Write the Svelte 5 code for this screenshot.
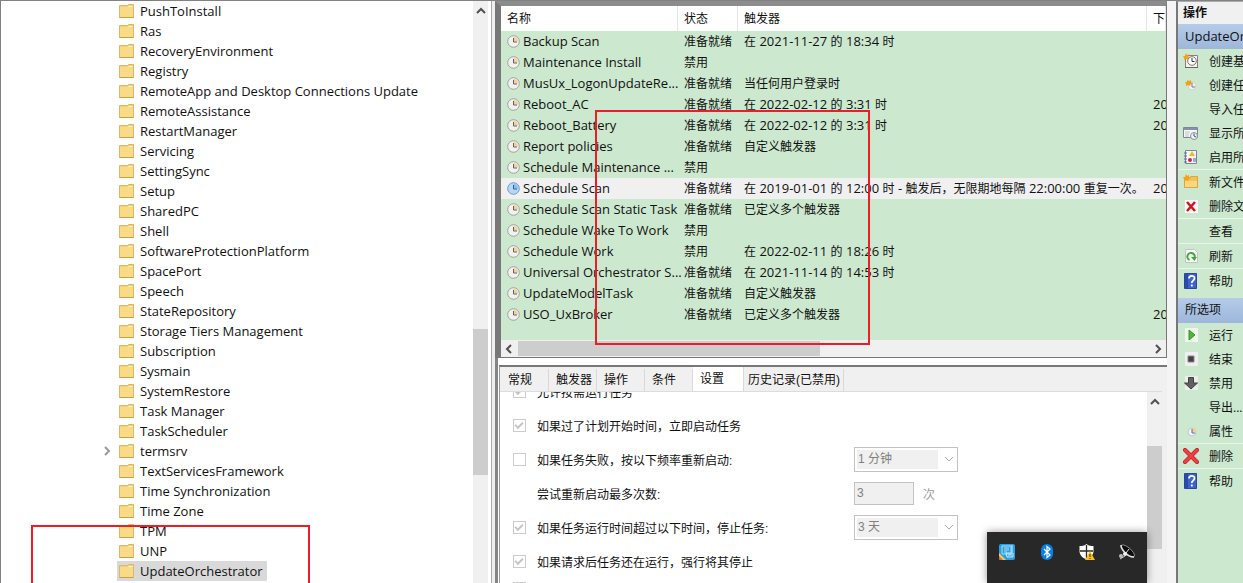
<script lang="ts">
	interface Task {
		name: string;
		status: string;
		trigger: string;
		next?: string;
	}

	interface Action {
		icon: string;
		label: string;
		line?: boolean;
	}

	let folders = [
		'PushToInstall', 'Ras', 'RecoveryEnvironment', 'Registry',
		'RemoteApp and Desktop Connections Update', 'RemoteAssistance', 'RestartManager',
		'Servicing', 'SettingSync', 'Setup', 'SharedPC', 'Shell', 'SoftwareProtectionPlatform',
		'SpacePort', 'Speech', 'StateRepository', 'Storage Tiers Management', 'Subscription',
		'Sysmain', 'SystemRestore', 'Task Manager', 'TaskScheduler', 'termsrv',
		'TextServicesFramework', 'Time Synchronization', 'Time Zone', 'TPM', 'UNP',
		'UpdateOrchestrator'
	];
	let current = $state('UpdateOrchestrator');

	const READY = '准备就绪';
	const OFF = '禁用';

	let tasks: Task[] = [
		{ name: 'Backup Scan', status: READY, trigger: '在 2021-11-27 的 18:34 时' },
		{ name: 'Maintenance Install', status: OFF, trigger: '' },
		{ name: 'MusUx_LogonUpdateRe...', status: READY, trigger: '当任何用户登录时' },
		{ name: 'Reboot_AC', status: READY, trigger: '在 2022-02-12 的 3:31 时', next: '20' },
		{ name: 'Reboot_Battery', status: READY, trigger: '在 2022-02-12 的 3:31 时', next: '20' },
		{ name: 'Report policies', status: READY, trigger: '自定义触发器' },
		{ name: 'Schedule Maintenance ...', status: OFF, trigger: '' },
		{
			name: 'Schedule Scan',
			status: READY,
			trigger: '在 2019-01-01 的 12:00 时 - 触发后，无限期地每隔 22:00:00 重复一次。',
			next: '20'
		},
		{ name: 'Schedule Scan Static Task', status: READY, trigger: '已定义多个触发器' },
		{ name: 'Schedule Wake To Work', status: OFF, trigger: '' },
		{ name: 'Schedule Work', status: OFF, trigger: '在 2022-02-11 的 18:26 时' },
		{ name: 'Universal Orchestrator S...', status: READY, trigger: '在 2021-11-14 的 14:53 时' },
		{ name: 'UpdateModelTask', status: READY, trigger: '自定义触发器' },
		{ name: 'USO_UxBroker', status: READY, trigger: '已定义多个触发器', next: '20' }
	];
	let selectedTask = $state('Schedule Scan');

	let tabs = ['常规', '触发器', '操作', '条件', '设置', '历史记录(已禁用)'];
	let activeTab = $state('设置');

	let folderActions: Action[] = [
		{ icon: 'basic', label: '创建基' },
		{ icon: 'create', label: '创建任' },
		{ icon: '', label: '导入任' },
		{ icon: 'running', label: '显示所' },
		{ icon: 'history', label: '启用所' },
		{ icon: 'folder', label: '新文件', line: true },
		{ icon: 'cross', label: '删除文' },
		{ icon: '', label: '查看', line: true },
		{ icon: 'refresh', label: '刷新', line: true },
		{ icon: 'help', label: '帮助', line: true }
	];

	let taskActions: Action[] = [
		{ icon: 'run', label: '运行' },
		{ icon: 'stop', label: '结束' },
		{ icon: 'down', label: '禁用' },
		{ icon: '', label: '导出...' },
		{ icon: 'clock', label: '属性' },
		{ icon: 'bigcross', label: '删除', line: true },
		{ icon: 'help', label: '帮助', line: true }
	];

	// Latin runs sit at odd indexes, they are set one size larger
	function runs(text: string): string[] {
		return text.split(/([ -~]+)/);
	}
</script>

{#snippet chevron(d: string)}
	<svg class="chevron" viewBox="0 0 10 10" width="10" height="10"><path {d} /></svg>
{/snippet}

{#snippet mixed(text: string)}
	{#each runs(text) as run, i}{#if i % 2}<span class="latin">{run}</span>{:else}{run}{/if}{/each}
{/snippet}

{#snippet actionIcon(name: string)}
	<svg class="action-icon" viewBox="0 0 16 16" width="16" height="16">
		{#if name === 'basic'}
			<path d="M2.500 2.500h12v12h-12z" fill="#f5f1ec" stroke="#8a7f80" />
			<path d="M2 14.500h13" stroke="#6c6466" />
			<circle cx="9" cy="8" r="4.300" fill="#fff" stroke="#75787c" />
			<path d="M9 5v3.500h2.500" fill="none" stroke="#335" />
			<path d="M3 0l1 2 2-1-1 2 2 1-2 1 0 2-2-1-2 1 0-2-1-2 2 0z" fill="#f5a21b" />
		{:else if name === 'create'}
			<circle cx="9" cy="9" r="4" fill="#f3f1f0" stroke="#d5cfcb" />
			<path d="M9 6v4h3" fill="none" stroke="#5b82b8" />
			<path d="M4 3l2 1 2-1 0 2 2 1-2 1-1 2-2-1-2 1 0-2-1-2 2 0z" fill="#f2a11c" />
		{:else if name === 'running'}
			<path d="M.5 2.500h14v10h-14z" fill="#f8f8f8" stroke="#7e8795" />
			<path d="M1 4h13" stroke="#8792a4" stroke-width="2" />
			<path d="M2 7h5M2 9h4M2 11h4" stroke="#b9bec6" />
			<circle cx="11" cy="11" r="3.500" fill="#eef2f7" stroke="#8b8f96" />
			<path d="M11 8.500V11l2 1" fill="none" stroke="#3d5170" />
		{:else if name === 'history'}
			<path d="M2.500 1.500h11v13h-11z" fill="#f6f6fa" stroke="#7a86a6" />
			<path d="M1 4h3M1 7h3M1 10h3M1 13h3" stroke="#586b99" />
			<path d="M9 2l3 5H6z" fill="#f0b91c" />
			<circle cx="7" cy="11" r="2" fill="#d5262c" />
			<path d="M10 10h3M10 12h3" stroke="#3f60b6" />
		{:else if name === 'folder'}
			<path d="M1.500 4.500h5l1-2h7v11h-13z" fill="#f0c45a" stroke="#d9a545" />
			<path d="M2 7h12v6H2z" fill="#f9d87b" />
			<path d="M3 0l1 2 2-1 0 2 2 1-2 1-1 2-2-1-2 1 0-2-1-2 2 0z" fill="#f2a11c" />
		{:else if name === 'cross'}
			<path d="M2 2h13v13H2z" fill="#fbfbfb" />
			<path d="M4 4l8 9M12 4l-8 9" stroke="#d2141b" stroke-width="2.500" />
		{:else if name === 'refresh'}
			<path d="M2.500 1.500h9l3 3v10h-12z" fill="#fafafa" stroke="#c4c4c4" />
			<path d="M6.500 12A3.700 3.700 0 1 1 11.500 10" fill="none" stroke="#3faa38" stroke-width="2" />
			<path d="M8 9h6l-2.500 4z" fill="#3faa38" />
		{:else if name === 'help'}
			<path d="M1.500.500h12v15h-12z" fill="#3d62ce" stroke="#2b4799" />
			<path d="M2 1h3v14H2z" fill="#294aa8" />
			<path d="M6 5.500C6 2 11.500 2 11.500 5.200 11.500 7.500 8.800 7.500 8.800 10M8.800 11.500v2" fill="none" stroke="#fff" stroke-width="1.800" />
		{:else if name === 'run'}
			<path d="M2 1h13v14H2z" fill="#f1f5ef" />
			<path d="M6 3l6 5-6 5z" fill="#46bb2e" stroke="#2f9c22" />
		{:else if name === 'stop'}
			<path d="M2 1h13v14H2z" fill="#efefef" />
			<path d="M5 5h6v6H5z" fill="#414141" stroke="#888" />
		{:else if name === 'down'}
			<path d="M2 1h13v14H2z" fill="#eceeec" />
			<path d="M5.500 2.500h5V8h4l-6.500 6-6.500-6h4z" fill="#606060" stroke="#404040" />
		{:else if name === 'clock'}
			<circle cx="9" cy="9" r="4" fill="#f4f5f6" stroke="#c8c4c2" />
			<path d="M9 5a4 4 0 0 1 4 4H9z" fill="#f3d292" />
			<path d="M9 6v4h3" fill="none" stroke="#456aa8" />
		{:else if name === 'bigcross'}
			<path d="M2 2l12 12M14 2L2 14" stroke="#a71a1c" stroke-width="4" stroke-linecap="round" />
			<path d="M2 2l12 12M14 2L2 14" stroke="#ec4043" stroke-width="3" stroke-linecap="round" />
		{/if}
	</svg>
{/snippet}

{#snippet actionList(items: Action[])}
	<ul class="actions">
		{#each items as item}
			<li class:line={item.line}>
				<button type="button">
					{@render actionIcon(item.icon)}
					<span>{item.label}</span>
				</button>
			</li>
		{/each}
	</ul>
{/snippet}

<div class="window">
	<nav class="tree-pane">
		<ul class="tree">
			{#each folders as folder}
				<li>
					<span class="twisty">
						{#if folder === 'termsrv'}{@render chevron('M3 1l4 4-4 4')}{/if}
					</span>
					<button type="button" class:current={folder === current} onclick={() => (current = folder)}>
						<svg viewBox="0 0 15 14" width="15" height="14">
							<path d="M.5 1.500h8l1-1h5v13H.5z" fill="#f0cf78" stroke="#dcb969" />
							<path d="M1 3h8l1-1h4v11H1z" fill="#f9da87" />
							<path d="M9.500 2.500h4" stroke="#fff3cb" />
							<path d="M.5 13.500h14" stroke="#c9a049" />
						</svg>
						<span>{folder}</span>
					</button>
				</li>
			{/each}
		</ul>
		<div class="scroll-v tree-scroll">
			{@render chevron('M1 7l4-4 4 4')}
			<div class="thumb"></div>
		</div>
		<div class="mark mark-folder"></div>
	</nav>

	<main class="center">
		<section class="task-pane">
			<table>
				<colgroup>
					<col class="col-name" />
					<col class="col-status" />
					<col />
					<col class="col-next" />
				</colgroup>
				<thead>
					<tr><th>名称</th><th>状态</th><th>触发器</th><th>下</th></tr>
				</thead>
				<tbody>
					{#each tasks as task}
						<tr class:selected={task.name === selectedTask} onclick={() => (selectedTask = task.name)}>
							<td class="name-cell">
								<div class="task-name">
									<svg viewBox="0 0 13 13" width="13" height="13">
										<circle cx="6.500" cy="6.500" r="5.800" fill={task.name === selectedTask ? '#b9d6f3' : '#f1f1ee'} stroke={task.name === selectedTask ? '#6b9bcc' : '#a3a19f'} />
										<path d="M6.500 2a4.500 4.500 0 0 1 4.500 4.500H6.500z" fill={task.name === selectedTask ? '#8fbce8' : '#f1d19a'} />
										<path d="M6.500 3v4H10" fill="none" stroke={task.name === selectedTask ? '#275f9c' : '#66605c'} />
									</svg>
									<span>{task.name}</span>
								</div>
							</td>
							<td>{task.status}</td>
							<td>{@render mixed(task.trigger)}</td>
							<td>{@render mixed(task.next ?? '')}</td>
						</tr>
					{/each}
				</tbody>
			</table>
			<div class="scroll-h">
				{@render chevron('M7 1L3 5l4 4')}
				<div class="track"><div class="thumb"></div></div>
				{@render chevron('M3 1l4 4-4 4')}
			</div>
			<div class="mark mark-tasks"></div>
		</section>

		<section class="detail-pane">
			<div class="tabs" role="tablist">
				{#each tabs as tab}
					<button type="button" role="tab" aria-selected={tab === activeTab} onclick={() => (activeTab = tab)}>{tab}</button>
				{/each}
			</div>
			<div class="detail-body">
				<div class="settings">
					<div class="setting">
						<input type="checkbox" id="on-demand" checked disabled />
						<label for="on-demand">允许按需运行任务</label>
					</div>
					<div class="setting">
						<input type="checkbox" id="missed" checked disabled />
						<label for="missed">如果过了计划开始时间，立即启动任务</label>
					</div>
					<div class="setting">
						<input type="checkbox" id="retry" disabled />
						<label for="retry">如果任务失败，按以下频率重新启动:</label>
						<div class="field">
							<select disabled aria-label="重新启动频率"><option>1 分钟</option></select>
							{@render chevron('M1 3l4 4 4-4')}
						</div>
					</div>
					<div class="setting">
						<label class="indent" for="attempts">尝试重新启动最多次数:</label>
						<div class="field">
							<input type="text" id="attempts" value="3" disabled />
							<span class="unit">次</span>
						</div>
					</div>
					<div class="setting">
						<input type="checkbox" id="limit" checked disabled />
						<label for="limit">如果任务运行时间超过以下时间，停止任务:</label>
						<div class="field">
							<select disabled aria-label="停止任务时间"><option>3 天</option></select>
							{@render chevron('M1 3l4 4 4-4')}
						</div>
					</div>
					<div class="setting">
						<input type="checkbox" id="force" checked disabled />
						<label for="force">如果请求后任务还在运行，强行将其停止</label>
					</div>
					<div class="setting last">
						<input type="checkbox" disabled aria-label="删除任务" />
					</div>
				</div>
				<div class="scroll-v detail-scroll">
					{@render chevron('M1 7l4-4 4 4')}
					<div class="thumb"></div>
				</div>
			</div>
		</section>

		<div class="tray">
			<svg viewBox="0 0 16 16" width="16" height="16">
				<rect width="16" height="16" rx="2" fill="#2d9fe0" />
				<path d="M3 2h9v8H3zM5 4h5M5 6h5M5 8h3" fill="none" stroke="#a5ddfa" />
				<path d="M7 9h7v4H8zM10 10v2M12 10v2M13 1v7" fill="none" stroke="#c8ecff" />
				<path d="M0 9l7 7H2a2 2 0 0 1-2-2z" fill="#e9d04f" />
				<path d="M0 12l4 4H2a2 2 0 0 1-2-2z" fill="#e1604a" />
			</svg>
			<svg viewBox="0 0 16 16" width="16" height="16">
				<rect x="2" width="12" height="16" rx="6" fill="#0a7fe6" />
				<path d="M5 5l6 6-3 2.500v-11L11 5l-6 6" fill="none" stroke="#fff" stroke-width="1.200" />
			</svg>
			<svg viewBox="0 0 16 16" width="16" height="16">
				<path d="M7.500 0C5 2 3 2 .500 2v5c0 4 3 7 7 8.500 4-1.500 7-4.500 7-8.500V2C12 2 10 2 7.500 0z" fill="#fff" />
				<path d="M7.500 1v14M1 7h13" stroke="#282828" stroke-width="1.300" />
				<path d="M11 7l5 9H6z" fill="#fcbf19" />
				<path d="M11 10v3M11 14v1" stroke="#3b2b00" />
			</svg>
			<svg viewBox="0 0 16 16" width="16" height="16">
				<path d="M3 1C7 0 16 8 15.500 12 14 15 8 12 5 8 2 5 1 2 3 1z" fill="#0c0c0c" stroke="#8c8c8c" />
				<path d="M2 1c0 4 6 12 13 12" fill="none" stroke="#e2e2e2" stroke-width="1.500" />
				<path d="M7 9l3-4" stroke="#ddd" />
				<circle cx="6" cy="10" r="2" fill="#f1f1f1" />
				<circle cx="2" cy="12" r="2" fill="#bbb" />
				<path d="M1 15l5-3" stroke="#ccc" />
			</svg>
		</div>
	</main>

	<aside class="action-pane">
		<h2>操作</h2>
		<h3>UpdateOr</h3>
		{@render actionList(folderActions)}
		<h3 class="second">所选项</h3>
		{@render actionList(taskActions)}
	</aside>
</div>

<style>
	:global(body) {
		background: #f0f0f0;
	}

	.window {
		--green: #cce8cf;
		--bar: #f0f0f0;
		--thumb: #cdcdcd;
		--frame: #777;
		position: relative;
		display: grid;
		grid-template-columns: 491px minmax(0, 1fr) 75px;
		height: 100vh;
		overflow: hidden;
		box-sizing: border-box;
		border-top: 1px solid #828282;
		font-family: 'Open Sans', 'Noto Sans CJK SC', sans-serif;
		font-size: 12px;
		color: #111;
	}

	button,
	input,
	select {
		font: inherit;
		color: inherit;
		margin: 0;
	}

	button {
		padding: 0;
		border: 0;
		background: none;
		text-align: left;
	}

	ul {
		margin: 0;
		padding: 0;
		list-style: none;
	}

	svg {
		flex: none;
	}

	.chevron {
		fill: none;
		stroke: #505050;
		stroke-width: 2;
	}

	.latin {
		font-size: 13px;
		white-space: pre;
	}

	.mark {
		position: absolute;
		box-sizing: border-box;
		border: 2px solid #ee1c25;
		pointer-events: none;
	}

	/* folder tree */
	.tree-pane {
		display: flex;
		min-height: 0;
		overflow: hidden;
		background: #fff;
		border-left: 1px solid #828282;
	}

	.tree {
		flex: 1;
		min-width: 0;
		padding-left: 101px;
	}

	.tree li {
		display: flex;
		align-items: center;
		height: 20px;
	}

	.twisty {
		display: flex;
		width: 15px;
	}

	.twisty .chevron {
		stroke: #999;
	}

	.tree button {
		display: flex;
		align-items: center;
		gap: 6px;
		height: 20px;
		padding: 0 4px 0 2px;
		font-size: 13px;
		line-height: 20px;
		white-space: nowrap;
	}

	.tree button.current {
		background: #d9d9d9;
	}

	.scroll-v {
		display: flex;
		flex-direction: column;
		align-items: center;
		flex: 0 0 15px;
		background: var(--bar);
	}

	.scroll-v .thumb {
		width: 100%;
		background: var(--thumb);
	}

	.tree-scroll {
		padding-top: 5px;
		margin-right: 3px;
	}

	.tree-scroll .thumb {
		height: 146px;
		margin-top: 313px;
	}

	.mark-folder {
		left: 31px;
		top: 524px;
		width: 279px;
		height: 70px;
	}

	/* center column */
	.center {
		position: relative;
		display: flex;
		flex-direction: column;
		min-width: 0;
		min-height: 0;
		margin-right: -8px;
		padding-left: 4px;
		background: linear-gradient(90deg, #aaa 1px, #eee 1px, #eee 4px, #858585 4px, #858585 7px, #fff 7px);
		border-right: 9px solid #f4f4f4;
	}

	.task-pane {
		position: relative;
		border: solid #777;
		border-width: 5px 1px 1px 6px;
		border-top-color: #8c8c8c;
		background: var(--green);
	}

	table {
		width: 100%;
		table-layout: fixed;
		border-collapse: collapse;
	}

	.col-name {
		width: 177px;
	}

	.col-status {
		width: 60px;
	}

	.col-next {
		width: 19px;
	}

	th,
	td {
		padding: 0 0 0 6px;
		overflow: hidden;
		white-space: nowrap;
		text-align: left;
		font-weight: 400;
	}

	th {
		height: 25px;
		line-height: 24px;
		background: #fff;
		box-shadow: inset -1px 0 #e5e5e5;
	}

	td {
		height: 21px;
		line-height: 21px;
	}

	.name-cell {
		overflow: visible;
	}

	tr.selected {
		background: #f0f0f0;
	}

	.task-name {
		display: flex;
		align-items: center;
		gap: 3px;
		font-size: 13px;
	}

	.scroll-h {
		display: flex;
		align-items: center;
		height: 17px;
		margin-top: 15px;
		padding: 0 3px;
		background: var(--bar);
	}

	.scroll-h .track {
		flex: 1;
		margin: 0 5px 0 4px;
	}

	.scroll-h .thumb {
		width: 48%;
		height: 15px;
		background: var(--thumb);
	}

	.mark-tasks {
		left: 94px;
		top: 104px;
		width: 275px;
		height: 235px;
	}

	.detail-pane {
		display: flex;
		flex: 1;
		flex-direction: column;
		min-height: 0;
		margin-top: 7px;
		margin-left: 4px;
		border-top: 2px solid #777;
		border-left: 1px solid #999;
		background: var(--bar);
		font-family: 'Liberation Sans', 'Noto Sans CJK SC', sans-serif;
	}

	.tabs {
		display: flex;
		height: 24px;
		padding-left: 1px;
	}

	.tabs button {
		min-width: 48px;
		margin-top: 2px;
		padding: 0 4px 0 7px;
		border-right: 1px solid #d9d9d9;
		line-height: 22px;
		white-space: nowrap;
	}

	.tabs button[aria-selected='true'] {
		min-width: 51px;
		margin-top: 0;
		background: #fff;
	}

	.tabs button:last-child {
		padding: 0 3px 0 4px;
	}

	.detail-body {
		display: flex;
		flex: 1;
		min-height: 0;
		overflow: hidden;
		margin-right: 5px;
		border-top: 1px solid #dcdcdc;
		background: #fff;
	}

	.settings {
		flex: 1;
		margin-top: -18px;
		padding-left: 13px;
		min-width: 0;
	}

	.setting {
		position: relative;
		display: flex;
		align-items: center;
		height: 34px;
	}

	.setting.last {
		height: 20px;
	}

	.setting label {
		margin-left: 11px;
		white-space: nowrap;
	}

	.setting .indent {
		margin-left: 24px;
	}

	input[type='checkbox'] {
		appearance: none;
		box-sizing: border-box;
		flex: none;
		width: 13px;
		height: 13px;
		border: 1px solid #ccc;
		background: #fff;
	}

	input[type='checkbox']:checked::after {
		content: '';
		display: block;
		width: 6px;
		height: 3px;
		margin: 2px 0 0 1px;
		border: solid #c4c4c4;
		border-width: 0 0 2px 2px;
		transform: rotate(-45deg);
	}

	.field {
		position: absolute;
		left: 341px;
		display: flex;
		align-items: center;
		color: #808080;
	}

	select,
	input[type='text'] {
		appearance: none;
		box-sizing: border-box;
		border: 1px solid #c3c3c3;
		border-radius: 0;
		opacity: 1;
	}

	select {
		width: 104px;
		height: 25px;
		padding: 0 0 0 3px;
		background: linear-gradient(90deg, #f0f0f0 81px, #fff 81px) 2px 2px / 98px 19px no-repeat #fff;
	}

	input[type='text'] {
		width: 60px;
		height: 23px;
		padding: 0 2px;
		background: #f0f0f0;
	}

	.field .chevron {
		margin-left: -14px;
		stroke: #aaa;
		stroke-width: 1;
	}

	.unit {
		margin-left: 9px;
		color: #a0a0a0;
	}

	.detail-scroll {
		padding-top: 5px;
	}

	.detail-scroll .thumb {
		height: 103px;
		margin-top: 39px;
	}

	.tray {
		position: absolute;
		right: 20px;
		bottom: 0;
		display: flex;
		justify-content: space-between;
		box-sizing: border-box;
		width: 160px;
		height: 51px;
		padding: 12px;
		background: #282828;
		box-shadow: 0 0 8px #0006;
	}

	/* actions */
	.action-pane {
		min-width: 0;
		overflow: hidden;
		margin-left: 8px;
		border-left: 2px solid var(--frame);
		border-top: 1px solid #aaa;
		background: var(--green);
	}

	h2,
	h3 {
		margin: 0;
		font-size: 12px;
		white-space: nowrap;
	}

	h2 {
		height: 22px;
		padding-left: 5px;
		background: var(--bar);
		line-height: 21px;
	}

	h3 {
		height: 25px;
		padding-left: 7px;
		background: linear-gradient(#b5cbe8, #9db7db);
		font-size: 13px;
		font-weight: 400;
		line-height: 24px;
	}

	h3.second {
		margin-top: 5px;
		font-size: 12px;
	}

	.actions li.line {
		border-top: 1px solid #e8f5e9;
	}

	.actions button {
		display: flex;
		align-items: center;
		gap: 10px;
		width: 100%;
		height: 24px;
		padding-left: 5px;
		white-space: nowrap;
	}
</style>
